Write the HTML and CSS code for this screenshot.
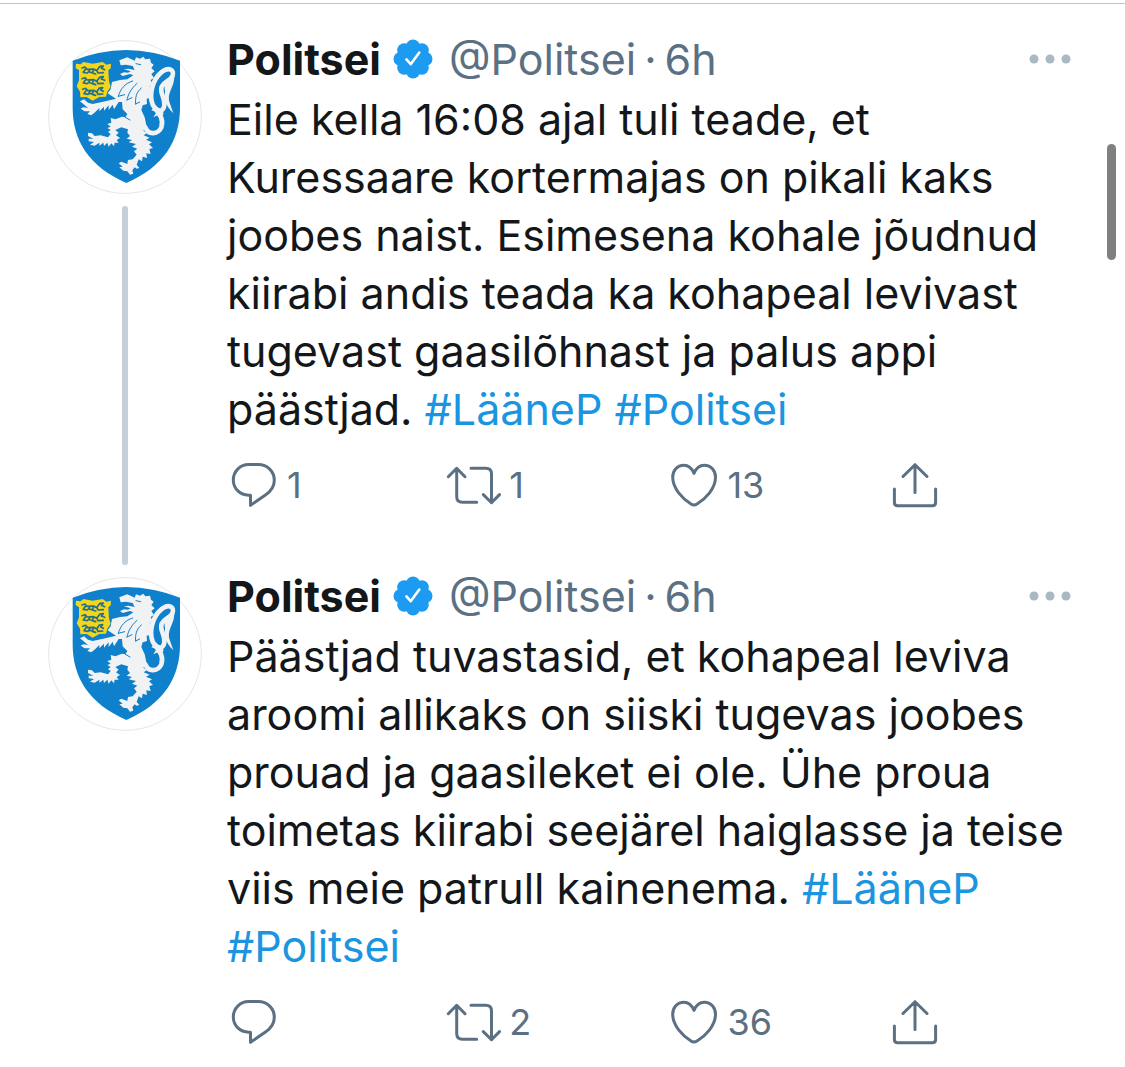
FILE: index.html
```html
<!DOCTYPE html>
<html lang="et">
<head>
<meta charset="utf-8">
<meta name="viewport" content="width=device-width, initial-scale=1">
<title>Politsei</title>
<link rel="stylesheet" href="styles.css">
</head>
<body>
<svg class="sprite" aria-hidden="true">
  <symbol id="crest" viewBox="24 30 462 462">
    <circle cx="255" cy="261" r="229" fill="#fff" stroke="#e6e6e8" stroke-width="3"/>
    <path d="M98 92Q178 61 258 60Q340 61 420 92V232C420 332 372 410 259 459C146 410 98 332 98 232Z" fill="#0f80cb"/>
    <g fill="#f1f2f4">
      <path d="M238 91L262 82L284 92L288 82L300 86L310 80L316 88L330 86L333 98L341 104L334 114L344 124L334 132L342 144L332 150L339 164L329 168L335 184L326 188L331 204L320 206L321 222L308 226L304 240L314 262L320 290L310 302L321 309L311 316L329 323L318 329L336 337L327 343L339 354L328 357L332 372L319 370L321 384L308 380L306 394L296 388L290 404L298 414L290 416L284 412L277 421L280 431L270 434L262 424L250 422L238 412L248 410L236 400L244 395L262 402L264 390L278 388L290 374L282 364L292 356L276 350L288 342L266 337L276 330L260 326L270 318L262 308L264 298L244 292L226 300L236 308L228 316L240 324L230 330L236 338L224 338L222 349L214 340L206 350L202 338L192 348L190 338L178 347L178 338L164 347L150 344L162 336L146 334L146 326L160 326L144 318L144 308L156 310L164 318L182 316L204 322L212 312L204 306L212 300L202 294L212 290L202 282L214 278L212 264L226 268L246 260L256 262L262 252L248 238L246 216L236 216L222 238L218 224L206 240L206 226L192 242L192 230L178 244L178 234L166 246L154 256L142 252L150 244L134 244L122 236L130 232L144 234L130 222L120 214L132 208L144 218L158 222L196 214L228 206L212 196L203 190L212 178L216 156L240 150L262 148L280 136L270 132L248 138L240 132L252 127L264 128L272 124L252 118L266 116L284 120L278 108L258 104L242 106Z"/>
    </g>
    <path d="M316 292C326 318 355 312 364 292C374 262 350 245 338 224C326 194 338 148 364 127C386 108 405 120 397 139C390 154 372 154 365 170C358 190 376 202 373 226C371 242 361 246 348 237" fill="none" stroke="#f1f2f4" stroke-width="14" stroke-linecap="round"/>
    <path d="M375 182C369 150 391 158 398 139L402 128C408 170 379 184 389 218L400 250Q380 231 374 207Z" fill="#f1f2f4"/>
    <path d="M347 226L334 241L350 246L340 262L357 254L364 267L371 249Z" fill="#f1f2f4"/>
    <g fill="none" stroke="#0f80cb" stroke-width="3" stroke-linecap="round">
      <path d="M278 153C256 160 242 174 235 199M291 160C271 178 264 195 261 210M304 174C289 186 285 204 287 222M235 199L254 194M261 210L276 203M287 222L299 216M288 101L302 104M256 262L270 270"/>
    </g>
    <path d="M108 101L122 103L130 96L158 101L188 96L199 104L213 101L212 115L205 121L207 154L212 170L202 185L198 200L178 201L158 212L140 201L121 202L120 185L110 169L117 151V121L107 114Z" fill="#f3d51c"/>
    <path d="M126 114l9-3 6 7 20-1 9 5 10-13 10-1-6 7 10 4M136 118l-6 9 12 2M150 119l-5 7 8 1M170 120l4 9 16-1M160 120l-3 9 10 3
             M126 146l9-3 6 7 20-1 9 5 10-13 10-1-6 7 10 4M136 150l-6 9 12 2M150 151l-5 7 8 1M170 152l4 9 16-1M160 152l-3 9 10 3
             M128 178l9-3 6 7 18-1 9 5 8-12 10-1-6 7 8 4M138 182l-6 9 12 2M151 183l-5 7 8 1M170 184l4 9 14-1M160 184l-3 9 10 3" fill="none" stroke="#236f8c" stroke-width="5" stroke-linejoin="round" stroke-linecap="round"/>
  </symbol>
  <symbol id="verified" viewBox="-20 -20 40 40">
    <g fill="#1d9bf0">
      <circle r="16"/>
      <circle cy="-12.5" r="7"/><circle cy="12.5" r="7"/><circle cx="-12.5" r="7"/><circle cx="12.5" r="7"/>
      <circle cx="8.8" cy="8.8" r="7"/><circle cx="-8.8" cy="8.8" r="7"/><circle cx="8.8" cy="-8.8" r="7"/><circle cx="-8.8" cy="-8.8" r="7"/>
    </g>
    <path d="M-6.6 .4L-2.3 5.2L6.3-6.4" fill="none" stroke="#fff" stroke-width="2.6" stroke-linecap="round" stroke-linejoin="round"/>
  </symbol>
  <symbol id="more" viewBox="0 0 42 10">
    <circle cx="5" cy="5" r="4.5"/><circle cx="21" cy="5" r="4.5"/><circle cx="37" cy="5" r="4.5"/>
  </symbol>
  <symbol id="reply" viewBox="0 0 48 48">
    <path d="M18.7 3.6h9.4c9.3 0 16.2 7 16.2 15.7c0 6.2-3.2 10.8-8.5 14.4L20.5 44.3V34.2h-1.8C9.7 34 3.3 27.4 3.3 19S10 3.6 18.7 3.6z"/>
  </symbol>
  <symbol id="retweet" viewBox="4 0 50 48" overflow="visible">
    <path d="M2.3 15.7L10.7 7.3L19 15.7M10.7 7.3V35.5Q10.7 41.3 16.5 41.3H30.7M25 7.3H39.7Q45.5 7.3 45.5 13V41.7M37.3 33.6L45.5 41.7L53.5 33.6"/>
  </symbol>
  <symbol id="like" viewBox="0 0 48 48">
    <path d="M24 12.3C21.8 7.2 18.2 4.3 13.8 4.3C7.2 4.3 2.7 9.7 2.7 16.3C2.7 27.5 12.5 37.5 21 43.1Q24 45 27 43.1C35.8 37.5 45.5 27.5 45.5 16.3C45.5 9.7 41 4.3 34.3 4.3C29.8 4.3 26.2 7.2 24 12.3z"/>
  </symbol>
  <symbol id="share" viewBox="0 0 48 48">
    <path d="M12 15.5L24 3.7L36 15.5M24 3.7V31.5M3.4 28V41.5Q3.4 44.7 6.6 44.7H41.4Q44.6 44.7 44.6 41.5V28"/>
  </symbol>
</svg>

<main class="feed">
  <article class="tweet">
    <div class="rail">
      <svg class="avatar" role="img" aria-label="Politsei"><use href="#crest"/></svg>
      <div class="thread"></div>
    </div>
    <div class="content">
      <header class="head">
        <a class="name" href="#">Politsei</a>
        <svg class="verified" aria-hidden="true"><use href="#verified"/></svg>
        <span class="meta"><span>@Politsei</span><span>·</span><span>6h</span></span>
        <button class="more" type="button" aria-label="More"><svg><use href="#more"/></svg></button>
      </header>
      <p class="text">Eile kella 16:08 ajal tuli teade, et Kuressaare kortermajas on pikali kaks joobes naist. Esimesena kohale jõudnud kiirabi andis teada ka kohapeal levivast tugevast gaasilõhnast ja palus appi päästjad. <a href="#">#LääneP</a> <a href="#">#Politsei</a></p>
      <div class="actions">
        <button type="button" aria-label="Reply"><svg><use href="#reply"/></svg><span>1</span></button>
        <button type="button" aria-label="Retweet"><svg class="wide"><use href="#retweet"/></svg><span>1</span></button>
        <button type="button" aria-label="Like"><svg><use href="#like"/></svg><span>13</span></button>
        <button type="button" aria-label="Share"><svg><use href="#share"/></svg></button>
      </div>
    </div>
  </article>

  <article class="tweet">
    <div class="rail">
      <svg class="avatar" role="img" aria-label="Politsei"><use href="#crest"/></svg>
    </div>
    <div class="content">
      <header class="head">
        <a class="name" href="#">Politsei</a>
        <svg class="verified" aria-hidden="true"><use href="#verified"/></svg>
        <span class="meta"><span>@Politsei</span><span>·</span><span>6h</span></span>
        <button class="more" type="button" aria-label="More"><svg><use href="#more"/></svg></button>
      </header>
      <p class="text">Päästjad tuvastasid, et kohapeal leviva aroomi allikaks on siiski tugevas joobes prouad ja gaasileket ei ole. Ühe proua toimetas kiirabi seejärel haiglasse ja teise viis meie patrull kainenema. <a href="#">#LääneP</a> <a href="#">#Politsei</a></p>
      <div class="actions">
        <button type="button" aria-label="Reply"><svg><use href="#reply"/></svg></button>
        <button type="button" aria-label="Retweet"><svg class="wide"><use href="#retweet"/></svg><span>2</span></button>
        <button type="button" aria-label="Like"><svg><use href="#like"/></svg><span>36</span></button>
        <button type="button" aria-label="Share"><svg><use href="#share"/></svg></button>
      </div>
    </div>
  </article>
</main>
<div class="scroll-thumb"></div>
</body>
</html>
```
FILE: styles.css
```css
* {
  box-sizing: border-box;
}

body {
  margin: 0;
  padding-top: 3px;
  background: #fff;
  color: #14171a;
  font-family: Inter, "Liberation Sans", sans-serif;
  font-size: 43px;
  line-height: 58px;
}

a {
  color: #1b95e0;
  text-decoration: none;
}

button {
  padding: 0;
  border: 0;
  background: none;
  color: inherit;
  font: inherit;
  cursor: pointer;
}

.sprite {
  position: absolute;
  width: 0;
  height: 0;
}

.feed {
  padding: 26px 48px 0;
  border-top: 1px solid #c4c4c6;
}

.tweet {
  display: flex;
  gap: 25px;
}

.rail {
  display: flex;
  flex: none;
  flex-direction: column;
  align-items: center;
  gap: 12px;
  width: 154px;
  padding-top: 10px;
}

.avatar {
  flex: none;
  width: 154px;
  height: 154px;
}

.thread {
  flex: 1;
  width: 6px;
  margin-bottom: 2px;
  border-radius: 3px;
  background: #c4cfd6;
}

.content {
  flex: 1;
  min-width: 0;
  padding-bottom: 58px;
}

.head {
  display: flex;
  align-items: center;
  white-space: nowrap;
}

.name {
  color: #14171a;
  font-weight: 700;
}

.verified {
  flex: none;
  width: 40px;
  height: 40px;
  margin: 0 16px 0 12px;
}

.meta {
  display: flex;
  gap: 8px;
  color: #5b7083;
}

.more {
  display: flex;
  margin-left: auto;
  padding: 6px;
}

.more svg {
  width: 42px;
  height: 10px;
  fill: #aab8c2;
}

.text {
  margin: 2px 0 23px;
}

.actions {
  display: flex;
  padding-left: 3px;
  color: #5b7083;
  font-size: 36px;
  line-height: 48px;
}

.actions button {
  display: flex;
  flex: 0 0 26%;
  align-items: center;
  gap: 9px;
}

.actions svg {
  flex: none;
  width: 48px;
  height: 48px;
  fill: none;
  stroke: currentColor;
  stroke-width: 3;
  stroke-linecap: round;
  stroke-linejoin: round;
}

.actions .wide {
  width: 50px;
  overflow: visible;
}

.scroll-thumb {
  position: fixed;
  top: 144px;
  right: 9px;
  width: 9px;
  height: 116px;
  border-radius: 5px;
  background: #808080;
}
```
